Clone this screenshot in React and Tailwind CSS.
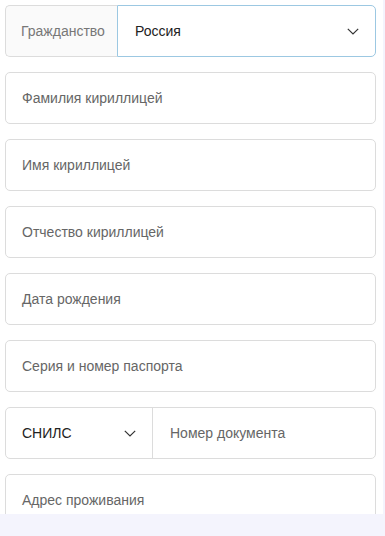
function Chevron() {
  return (
    <svg width="12" height="7" viewBox="0 0 12 7" fill="none">
      <path d="M0.8 0.8l5.2 5.2L11.2 0.8" stroke="#333" strokeWidth="1.2" />
    </svg>
  )
}

function Field({ placeholder }) {
  return (
    <div className="h-[52px] shrink-0 border border-[#dcdcdc] rounded-[5px] flex items-center px-4 text-[#666]">
      {placeholder}
    </div>
  )
}

export default function App() {
  return (
    <div className="w-[385px] h-[536px] bg-[#f4f4fd] overflow-hidden" style={{ fontFamily: '"Liberation Sans", Arial, sans-serif' }}>
      <div className="w-[383px] h-[514px] bg-white overflow-hidden">
        <div className="flex flex-col gap-[15px] pl-[5px] pr-[7px] pt-[5px] text-[14px]">
          {/* Citizenship */}
          <div className="h-[52px] shrink-0 flex rounded-[5px]">
            <div className="w-[112px] bg-[#fafafa] border border-r-0 border-[#dcdcdc] rounded-l-[5px] flex items-center pl-[15px] text-[#777]">
              Гражданство
            </div>
            <div className="flex-1 border border-[#9cc8e2] rounded-r-[5px] flex items-center justify-between pl-[17px] pr-[16px] text-[#222]">
              <span>Россия</span>
              <Chevron />
            </div>
          </div>

          <Field placeholder="Фамилия кириллицей" />
          <Field placeholder="Имя кириллицей" />
          <Field placeholder="Отчество кириллицей" />
          <Field placeholder="Дата рождения" />
          <Field placeholder="Серия и номер паспорта" />

          {/* Document */}
          <div className="h-[52px] shrink-0 border border-[#dcdcdc] rounded-[5px] flex">
            <div className="w-[147px] border-r border-[#dcdcdc] flex items-center justify-between pl-4 pr-[16px] text-[#222]">
              <span>СНИЛС</span>
              <Chevron />
            </div>
            <div className="flex-1 flex items-center pl-[17px] text-[#666]">Номер документа</div>
          </div>

          <Field placeholder="Адрес проживания" />
        </div>
      </div>
    </div>
  )
}
